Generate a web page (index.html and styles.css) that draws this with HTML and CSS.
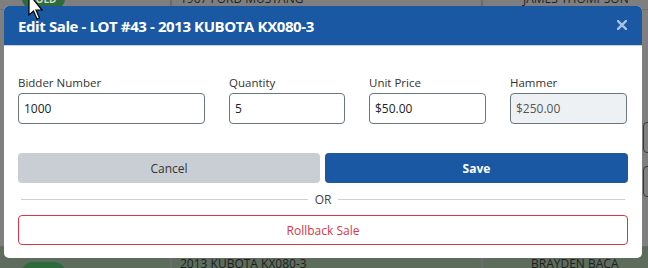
FILE: index.html
```html
<!DOCTYPE html>
<html>
<head>
<meta charset="utf-8">
<link rel="stylesheet" href="styles.css">
</head>
<body>
<div class="page">
  <div class="bg-row bg-row-top">
    <div class="cell c1"><span class="badge">SOLD</span></div>
    <div class="cell c2">1967 FORD MUSTANG</div>
    <div class="cell c3">JAMES THOMPSON</div>
  </div>
  <div class="bg-mid"></div>
  <div class="bg-row bg-row-bottom">
    <div class="cell c1"><span class="badge">SOLD</span></div>
    <div class="cell c2">2013 KUBOTA KX080-3</div>
    <div class="cell c3">BRAYDEN BACA</div>
  </div>
</div>
<div class="side-btn side-btn-a"></div>
<div class="side-btn side-btn-b"></div>

<div class="modal">
  <div class="modal-header">
    <h5 class="modal-title">Edit Sale - LOT #43 - 2013 KUBOTA KX080-3</h5>
    <svg class="close" width="10" height="10" viewBox="0 0 10 10" aria-label="Close">
      <path d="M1 1 L9 9 M9 1 L1 9" stroke="#a9c3e3" stroke-width="2.4" stroke-linecap="square"/>
    </svg>
  </div>
  <div class="modal-body">
    <div class="fields">
      <div class="field">
        <label>Bidder Number</label>
        <div class="input">1000</div>
      </div>
      <div class="field">
        <label>Quantity</label>
        <div class="input">5</div>
      </div>
      <div class="field">
        <label>Unit Price</label>
        <div class="input">$50.00</div>
      </div>
      <div class="field">
        <label>Hammer</label>
        <div class="input disabled">$250.00</div>
      </div>
    </div>
    <div class="actions">
      <button class="btn btn-cancel">Cancel</button>
      <button class="btn btn-save">Save</button>
    </div>
    <div class="divider"><span>OR</span></div>
    <button class="btn btn-rollback">Rollback Sale</button>
  </div>
</div>

<svg class="cursor" width="18" height="24" viewBox="0 0 18 24">
  <path d="M1 -6 L1 15 L5.5 11 L9 19 L11.5 18 L8 10 L14 10 Z" fill="#fff" stroke="#000" stroke-width="1.2" stroke-linejoin="miter"/>
</svg>
</body>
</html>
```
FILE: styles.css
```css
* { box-sizing: border-box; }
html, body { margin: 0; padding: 0; }
body {
  width: 648px;
  height: 268px;
  overflow: hidden;
  font-family: "Open Sans", "Noto Sans", sans-serif;
  background: #7f7f7f;
  position: relative;
}
.page {
  display: flex;
  flex-direction: column;
  height: 268px;
  overflow: hidden;
}
.bg-row {
  display: flex;
  height: 22px;
  flex: none;
  font-size: 12px;
  color: #1e1e1e;
}
.bg-row-top { margin-top: -12px; background: #7f7f7f; border-bottom: 1px solid #6f6f6f; }
.bg-mid { flex: 1; background: #7f7f7f; }
.bg-row-bottom {
  background: #5d6c5d;
  height: 22px;
  border-top: 1px solid #6a6a6a;
  padding-top: 9px;
  overflow: hidden;
  line-height: 16px;
}
.cell { display: flex; align-items: flex-start; }
.bg-row-top .cell { align-items: center; }
.c1 { width: 170px; padding-left: 22px; }
.c2 { width: 311px; padding-left: 8px; border-left: 2px solid #6c6c6c; }
.c3 { flex: 1; padding-left: 40px; border-left: 2px solid #6c6c6c; }
.bg-row-bottom .c1 { padding-top: 6px; }
.bg-row-bottom .c3 { padding-left: 48px; }
.badge {
  background: #2d6b3d;
  color: #cfd8cf;
  font-size: 10px;
  line-height: 14px;
  font-weight: 700;
  padding: 3px 8px;
  border-radius: 10px;
}
.side-btn {
  position: absolute;
  left: 643px;
  width: 20px;
  height: 31px;
  border: 1px solid #3a3a3a;
  border-radius: 4px;
}
.side-btn-a { top: 122px; }
.side-btn-b { top: 166px; }

.modal {
  position: absolute;
  left: 4px;
  top: 6px;
  width: 638px;
  height: 252px;
  background: #fff;
  border-radius: 5px;
  overflow: hidden;
}
.modal-header {
  height: 40px;
  background: #1a58a4;
  display: flex;
  align-items: center;
  justify-content: space-between;
  padding: 0 15px 0 14px;
  border-bottom: 1px solid #c8d2de;
}
.modal-title {
  margin: 0;
  color: #fff;
  font-size: 15px;
  font-weight: 700;
  letter-spacing: -0.4px;
}
.close {
  display: block;
  margin-top: -1px;
}
.modal-body {
  padding: 29px 14px 0 14px;
}
.fields {
  display: grid;
  grid-template-columns: 187px 116px 117px 117px;
  column-gap: 24px;
}
.field label {
  display: block;
  font-size: 11.5px;
  color: #333;
  height: 18px;
  line-height: 16px;
}
.input {
  height: 31px;
  border: 1px solid #6c757d;
  border-radius: 4px;
  font-size: 12px;
  color: #222;
  padding: 0 5px;
  display: flex;
  align-items: center;
}
.input.disabled { background: #eef1f4; color: #555; }
.actions {
  margin-top: 29px;
  display: grid;
  grid-template-columns: 302px 303px;
  column-gap: 5px;
}
.btn {
  font-family: inherit;
  border: none;
  border-radius: 4px;
  height: 30px;
  font-size: 12px;
  cursor: pointer;
}
.btn-cancel { background: #c9ced4; color: #333; }
.btn-save { background: #1a58a4; color: #fff; font-weight: 700; }
.divider {
  display: flex;
  align-items: center;
  gap: 7px;
  height: 32px;
  padding: 0 3px;
  font-size: 12px;
  color: #444;
}
.divider::before, .divider::after {
  content: "";
  flex: 1;
  border-top: 1px solid #d0d0d0;
}
.btn-rollback {
  width: 610px;
  height: 30px;
  background: #fff;
  border: 1px solid #dc3545;
  color: #dc3545;
}
.cursor {
  position: absolute;
  left: 28px;
  top: 0;
}
```
